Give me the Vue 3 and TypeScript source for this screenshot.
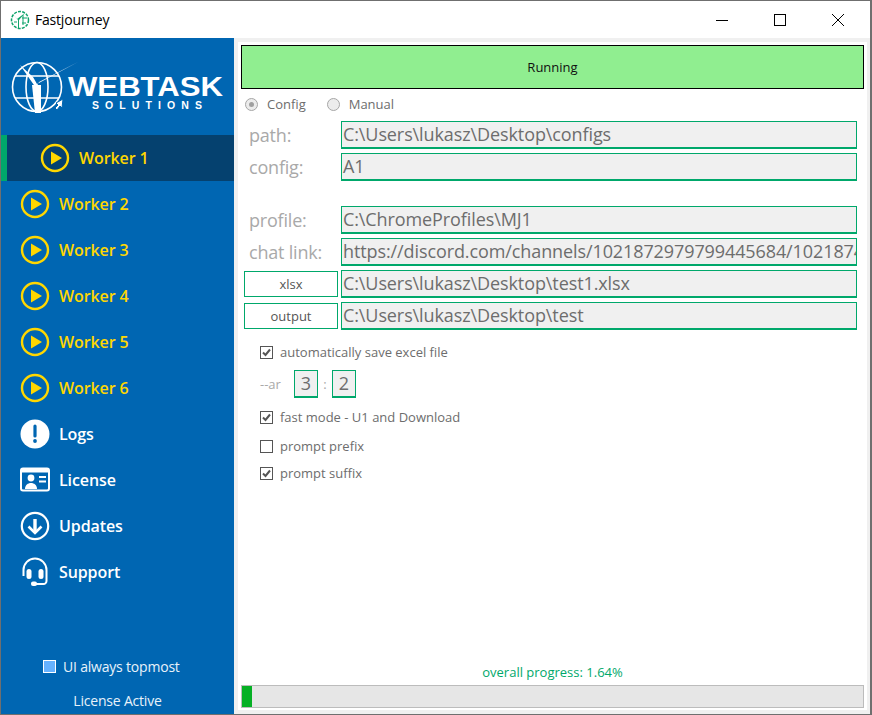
<template>
  <div class="window">
    <header class="titlebar">
      <svg class="app-icon" width="20" height="20" viewBox="0 0 20 20">
        <circle cx="10" cy="10" r="8.5" fill="none" stroke="#0fa36b" stroke-width="1.5" stroke-dasharray="3 1.2" />
        <path d="M3 4l4 5 8-6-6 7v8h-1v-8z" fill="#0fa36b" />
        <path d="M4 12h3M12 8h5M12 13h4M13 5v10" stroke="#0fa36b" fill="none" />
      </svg>
      <span class="app-title">Fastjourney</span>
      <div class="window-buttons">
        <button class="win-btn" aria-label="Minimize">
          <svg width="12" height="12" viewBox="0 0 12 12"><path d="M0 6.5h12" stroke="#000" /></svg>
        </button>
        <button class="win-btn" aria-label="Maximize">
          <svg width="12" height="12" viewBox="0 0 12 12"><rect x="0.5" y="0.5" width="11" height="11" fill="none" stroke="#000" /></svg>
        </button>
        <button class="win-btn" aria-label="Close">
          <svg width="12" height="12" viewBox="0 0 12 12"><path d="M0 0l12 12M12 0L0 12" stroke="#000" /></svg>
        </button>
      </div>
    </header>

    <div class="body">
      <aside class="sidebar">
        <svg class="logo" width="233" height="97" viewBox="0 0 233 97">
          <g fill="none" stroke="#fff" stroke-width="1.6">
            <circle cx="36" cy="49" r="24.5" />
            <ellipse cx="36" cy="49" rx="11" ry="24.5" />
            <path d="M14 38h44M14 60h44" />
          </g>
          <path d="M77 24L38 44l-3 6-16-23 13 12 4 7z" fill="#fff" />
          <path d="M31 47h9v28h-6z" fill="#fff" />
          <path d="M62 61l-1 9-2-2-3 4-2-2 3-3-2-2z" fill="#fff" stroke="#0066b2" />
          <text x="67" y="58" class="logo-main" textLength="155" lengthAdjust="spacingAndGlyphs">WEBTASK</text>
          <text x="91" y="71" class="logo-sub" textLength="110">SOLUTIONS</text>
        </svg>

        <nav class="nav">
          <div
            v-for="item in navItems"
            :key="item.label"
            class="nav-item"
            :class="{ active: item.active, worker: item.icon === 'play' }"
          >
            <svg class="nav-icon" width="30" height="30" viewBox="0 0 30 30">
              <template v-if="item.icon === 'play'">
                <circle cx="15" cy="15" r="13" fill="none" stroke="#ffd700" stroke-width="2.4" />
                <path d="M11 8.5l11 6.5-11 6.5z" fill="#ffd700" />
              </template>
              <template v-else-if="item.icon === 'logs'">
                <circle cx="15" cy="15" r="14.5" fill="#fff" />
                <path d="M15 7v10" stroke="#0066b2" stroke-width="3.2" stroke-linecap="round" />
                <circle cx="15" cy="22" r="1.9" fill="#0066b2" />
              </template>
              <template v-else-if="item.icon === 'license'">
                <rect x="1" y="3.5" width="28" height="22" rx="2" fill="none" stroke="#fff" stroke-width="2" />
                <path d="M1 6.5a3 3 0 0 1 3-3h22a3 3 0 0 1 3 3v1H1z" fill="#fff" />
                <circle cx="11" cy="13" r="3.4" fill="#fff" />
                <path d="M5 24c0-8 12-8 12 0z" fill="#fff" />
                <path d="M19 12h7M19 16.5h7" stroke="#fff" stroke-width="2" />
              </template>
              <template v-else-if="item.icon === 'updates'">
                <circle cx="15" cy="15" r="13.2" fill="none" stroke="#fff" stroke-width="2.2" />
                <path d="M15 8v12" stroke="#fff" stroke-width="3.4" />
                <path d="M8.5 15.5L15 22l6.5-6.5" fill="none" stroke="#fff" stroke-width="2.6" />
              </template>
              <template v-else>
                <path d="M3.5 19v-6a11.5 11.5 0 0 1 23 0v11a3 3 0 0 1-3 3H15" fill="none" stroke="#fff" stroke-width="2" />
                <rect x="6.5" y="12" width="5" height="10" rx="2.5" fill="#fff" />
                <rect x="18.5" y="12" width="5" height="10" rx="2.5" fill="#fff" />
                <rect x="11" y="24.5" width="6" height="4.5" rx="2" fill="#fff" />
              </template>
            </svg>
            <span class="nav-label">{{ item.label }}</span>
          </div>
        </nav>

        <div class="sidebar-foot">
          <div class="topmost">
            <span class="topmost-box"></span>
            <span>UI always topmost</span>
          </div>
          <div class="license-state">License Active</div>
        </div>
      </aside>

      <main class="main">
        <div class="status">Running</div>

        <div class="mode-row">
          <label class="radio-item">
            <span class="radio checked"></span>
            <span>Config</span>
          </label>
          <label class="radio-item">
            <span class="radio"></span>
            <span>Manual</span>
          </label>
        </div>

        <div class="form">
          <div class="form-row">
            <span class="field-label">path:</span>
            <div class="field">C:\Users\lukasz\Desktop\configs</div>
          </div>
          <div class="form-row">
            <span class="field-label">config:</span>
            <div class="field">A1</div>
          </div>
          <div class="form-row spaced">
            <span class="field-label">profile:</span>
            <div class="field">C:\ChromeProfiles\MJ1</div>
          </div>
          <div class="form-row">
            <span class="field-label">chat link:</span>
            <div class="field">https://discord.com/channels/1021872979799445684/1021874279799445</div>
          </div>
          <div class="form-row">
            <button class="pick">xlsx</button>
            <div class="field">C:\Users\lukasz\Desktop\test1.xlsx</div>
          </div>
          <div class="form-row">
            <button class="pick">output</button>
            <div class="field">C:\Users\lukasz\Desktop\test</div>
          </div>
        </div>

        <div class="options">
          <label class="check-item first">
            <svg class="check" width="13" height="13" viewBox="0 0 13 13"><rect x="0.5" y="0.5" width="12" height="12" fill="#fff" stroke="#555" /><path d="M3 6.5l2.5 2.5L10 3.5" fill="none" stroke="#555" stroke-width="2" /></svg>
            <span>automatically save excel file</span>
          </label>
          <div class="ratio">
            <span class="ratio-label">--ar</span>
            <div class="ratio-box">3</div>
            <span class="ratio-sep">:</span>
            <div class="ratio-box">2</div>
          </div>
          <label class="check-item fast">
            <svg class="check" width="13" height="13" viewBox="0 0 13 13"><rect x="0.5" y="0.5" width="12" height="12" fill="#fff" stroke="#555" /><path d="M3 6.5l2.5 2.5L10 3.5" fill="none" stroke="#555" stroke-width="2" /></svg>
            <span>fast mode - U1 and Download</span>
          </label>
          <label class="check-item prefix">
            <svg class="check" width="13" height="13" viewBox="0 0 13 13"><rect x="0.5" y="0.5" width="12" height="12" fill="#fff" stroke="#555" /></svg>
            <span>prompt prefix</span>
          </label>
          <label class="check-item suffix">
            <svg class="check" width="13" height="13" viewBox="0 0 13 13"><rect x="0.5" y="0.5" width="12" height="12" fill="#fff" stroke="#555" /><path d="M3 6.5l2.5 2.5L10 3.5" fill="none" stroke="#555" stroke-width="2" /></svg>
            <span>prompt suffix</span>
          </label>
        </div>

        <div class="progress-wrap">
          <div class="progress-label">overall progress: {{ progress }}%</div>
          <div class="progress-track">
            <div class="progress-fill" :style="{ width: progress + '%' }"></div>
          </div>
        </div>
      </main>
    </div>
  </div>
</template>

<script setup lang="ts">
interface NavItem {
  label: string
  icon: 'play' | 'logs' | 'license' | 'updates' | 'support'
  active?: boolean
}

const progress = 1.64

const navItems: NavItem[] = [
  { label: 'Worker 1', icon: 'play', active: true },
  { label: 'Worker 2', icon: 'play' },
  { label: 'Worker 3', icon: 'play' },
  { label: 'Worker 4', icon: 'play' },
  { label: 'Worker 5', icon: 'play' },
  { label: 'Worker 6', icon: 'play' },
  { label: 'Logs', icon: 'logs' },
  { label: 'License', icon: 'license' },
  { label: 'Updates', icon: 'updates' },
  { label: 'Support', icon: 'support' }
]
</script>

<style>
html,
body {
  margin: 0;
  background: #fff;
}
</style>

<style scoped>
.window {
  width: 872px;
  height: 715px;
  box-sizing: border-box;
  border: 1px solid #6f6f6f;
  border-right-width: 2px;
  display: flex;
  flex-direction: column;
  font-family: "Open Sans", "Noto Sans", sans-serif;
  overflow: hidden;
}

.titlebar {
  height: 37px;
  flex: none;
  display: flex;
  align-items: center;
  background: #fff;
  padding-left: 9px;
}

.app-icon {
  margin-right: 5px;
}

.app-title {
  font-size: 14px;
  color: #000;
  letter-spacing: -0.2px;
}

.window-buttons {
  margin-left: auto;
  display: flex;
  margin-right: 3px;
}

.win-btn {
  width: 58px;
  height: 37px;
  border: 0;
  padding: 0;
  background: none;
  display: flex;
  align-items: center;
  justify-content: center;
}

.body {
  flex: 1;
  display: flex;
  min-height: 0;
  background: #f0f0f0;
}

.sidebar {
  width: 233px;
  flex: none;
  background: #0066b2;
  display: flex;
  flex-direction: column;
}

.logo {
  display: block;
  flex: none;
}

.logo-main {
  font-family: "Liberation Sans", sans-serif;
  font-weight: 700;
  font-size: 28px;
  fill: #fff;
}

.logo-sub {
  font-family: "Liberation Sans", sans-serif;
  font-weight: 700;
  font-size: 10.5px;
  fill: #fff;
}

.nav-item {
  height: 46px;
  box-sizing: border-box;
  display: flex;
  align-items: center;
  padding-left: 19px;
  color: #fff;
}

.nav-item.worker {
  color: #ffd700;
}

.nav-item.active {
  background: #05416f;
  border-left: 6px solid #00a86b;
  padding-left: 33px;
}

.nav-icon {
  flex: none;
  margin-right: 9px;
}

.nav-label {
  font-size: 16px;
  font-weight: 600;
  letter-spacing: -0.1px;
}

.sidebar-foot {
  margin-top: auto;
  color: #e8f2fa;
  font-size: 14px;
  letter-spacing: -0.2px;
  padding-bottom: 4px;
}

.topmost {
  display: flex;
  align-items: center;
  padding-left: 42px;
  gap: 7px;
  margin-bottom: 15px;
}

.topmost-box {
  width: 11px;
  height: 11px;
  border: 1px solid #fff;
  background: #66b2ff;
}

.license-state {
  text-align: center;
}

.main {
  flex: 1;
  min-width: 0;
  margin: 4px 3px 4px 4px;
  background: #fff;
  padding: 3px 3px 2px;
  display: flex;
  flex-direction: column;
}

.status {
  height: 44px;
  box-sizing: border-box;
  border: 1px solid #000;
  background: #90ee90;
  display: flex;
  align-items: center;
  justify-content: center;
  font-size: 13px;
  color: #111;
}

.mode-row {
  display: flex;
  height: 30px;
  align-items: center;
  padding-left: 4px;
  gap: 21px;
  margin-bottom: 2px;
  font-size: 13px;
  color: #6d6d6d;
}

.radio-item {
  display: flex;
  align-items: center;
  gap: 9px;
}

.radio {
  width: 13px;
  height: 13px;
  box-sizing: border-box;
  border: 1px solid #a6a6a6;
  border-radius: 50%;
  background: #ececec;
  display: flex;
  align-items: center;
  justify-content: center;
}

.radio.checked::after {
  content: "";
  width: 5px;
  height: 5px;
  border-radius: 50%;
  background: #a0a0a0;
}

.form {
  display: flex;
  flex-direction: column;
  gap: 4px;
}

.form-row {
  display: grid;
  grid-template-columns: 100px 516px;
  align-items: center;
  height: 28px;
}

.form-row.spaced {
  margin-top: 21px;
}

.field-label {
  padding-left: 8px;
  font-size: 18px;
  color: #a9a9a9;
  letter-spacing: -0.2px;
}

.field {
  height: 28px;
  box-sizing: border-box;
  border: 1px solid #00a86b;
  border-bottom-width: 2px;
  background: #f0f0f0;
  color: #6d6d6d;
  font-size: 18px;
  line-height: 25px;
  padding-left: 1px;
  white-space: nowrap;
  overflow: hidden;
  letter-spacing: -0.1px;
}

.pick {
  width: 94px;
  height: 26px;
  margin-left: 3px;
  box-sizing: border-box;
  border: 1px solid #00a86b;
  background: #fff;
  color: #555;
  font-family: inherit;
  font-size: 13px;
  padding: 0;
}

.options {
  padding-left: 19px;
  font-size: 13px;
  color: #6d6d6d;
}

.check-item {
  display: flex;
  align-items: center;
  gap: 7px;
  height: 18px;
}

.check {
  flex: none;
}

.check-item.first {
  margin-top: 13px;
}

.ratio {
  display: flex;
  align-items: center;
  margin-top: 9px;
  height: 28px;
}

.ratio-label {
  color: #a9a9a9;
  width: 34px;
}

.ratio-box {
  width: 24px;
  height: 28px;
  box-sizing: border-box;
  border: 1px solid #00a86b;
  border-bottom-width: 2px;
  background: #f0f0f0;
  text-align: center;
  font-size: 18px;
  line-height: 25px;
}

.ratio-sep {
  width: 14px;
  text-align: center;
  color: #a9a9a9;
}

.check-item.fast {
  margin-top: 10px;
}

.check-item.prefix {
  margin-top: 11px;
}

.check-item.suffix {
  margin-top: 9px;
}

.progress-wrap {
  margin-top: auto;
}

.progress-label {
  text-align: center;
  font-size: 13px;
  color: #00a86b;
  margin-bottom: 4px;
}

.progress-track {
  height: 23px;
  box-sizing: border-box;
  border: 1px solid #bcbcbc;
  background: #e6e6e6;
}

.progress-fill {
  height: 100%;
  background: #06b025;
}
</style>
